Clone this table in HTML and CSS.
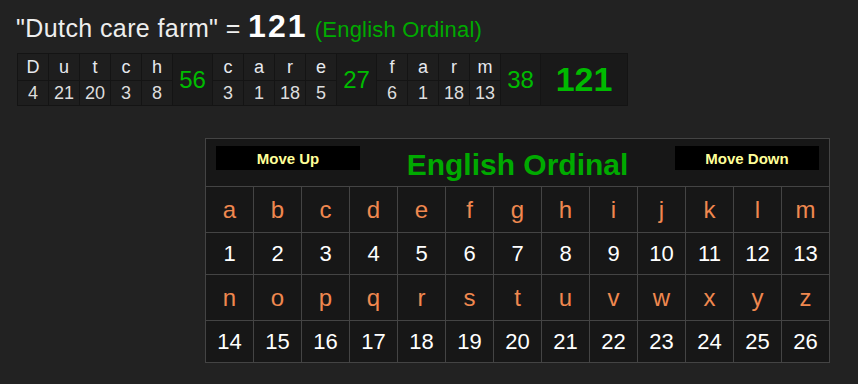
FILE: index.html
```html
<!DOCTYPE html>
<html lang="en">
<head>
    <meta charset="UTF-8">
    <meta name="viewport" content="width=device-width, initial-scale=1.0">
    <title>Dutch care farm = 121</title>
    <link rel="stylesheet" href="styles.css">
</head>
<body>
    <div class="phrase">"Dutch care farm" = <span class="total">121</span> <span class="cipher">(English Ordinal)</span></div>

    <table class="breakdown">
        <tr>
            <td class="ch">D</td><td class="ch">u</td><td class="ch">t</td><td class="ch">c</td><td class="ch">h</td>
            <td class="sum" rowspan="2">56</td>
            <td class="ch">c</td><td class="ch">a</td><td class="ch">r</td><td class="ch">e</td>
            <td class="sum" rowspan="2">27</td>
            <td class="ch">f</td><td class="ch">a</td><td class="ch">r</td><td class="ch">m</td>
            <td class="sum" rowspan="2">38</td>
            <td class="grand" rowspan="2">121</td>
        </tr>
        <tr>
            <td class="num">4</td><td class="num">21</td><td class="num">20</td><td class="num">3</td><td class="num">8</td>
            <td class="num">3</td><td class="num">1</td><td class="num">18</td><td class="num">5</td>
            <td class="num">6</td><td class="num">1</td><td class="num">18</td><td class="num">13</td>
        </tr>
    </table>

    <table class="chart">
        <tr class="head">
            <td colspan="13">
                <div class="head-bar">
                    <button class="move">Move Up</button>
                    <span class="title">English Ordinal</span>
                    <button class="move">Move Down</button>
                </div>
            </td>
        </tr>
        <tr class="letters">
            <td>a</td><td>b</td><td>c</td><td>d</td><td>e</td><td>f</td><td>g</td><td>h</td><td>i</td><td>j</td><td>k</td><td>l</td><td>m</td>
        </tr>
        <tr class="values">
            <td>1</td><td>2</td><td>3</td><td>4</td><td>5</td><td>6</td><td>7</td><td>8</td><td>9</td><td>10</td><td>11</td><td>12</td><td>13</td>
        </tr>
        <tr class="letters">
            <td>n</td><td>o</td><td>p</td><td>q</td><td>r</td><td>s</td><td>t</td><td>u</td><td>v</td><td>w</td><td>x</td><td>y</td><td>z</td>
        </tr>
        <tr class="values">
            <td>14</td><td>15</td><td>16</td><td>17</td><td>18</td><td>19</td><td>20</td><td>21</td><td>22</td><td>23</td><td>24</td><td>25</td><td>26</td>
        </tr>
    </table>
</body>
</html>
```

FILE: styles.css
```css
body{
    margin: 0;
    background-color: #222;
    font-family: "Liberation Sans", Arial, sans-serif;
    color: #ddd;
}
.phrase{
    box-sizing: border-box;
    height: 53px;
    padding: 11px 0 0 16px;
    font-size: 25px;
    line-height: 30px;
    letter-spacing: 0.4px;
    color: #eee;
}
.total{
    font-size: 32px;
    font-weight: bold;
    letter-spacing: 2px;
    color: #fff;
}
.cipher{
    font-size: 22px;
    letter-spacing: 0.2px;
    color: #0a0;
}
.breakdown{
    margin-left: 17px;
    border-spacing: 1px;
    background-color: #141414;
}
.breakdown td{
    padding: 0;
    text-align: center;
    background-color: #1e1e1e;
}
.breakdown .ch{
    width: 30px;
    height: 26px;
    font-size: 18px;
    color: #e6e9ee;
}
.breakdown .num{
    height: 24px;
    font-size: 18px;
    color: #ddd;
}
.breakdown .sum{
    width: 39px;
    font-size: 24px;
    color: #0b0;
    background-color: #1b1b1b;
}
.breakdown .grand{
    width: 86px;
    font-size: 34px;
    font-weight: bold;
    color: #0b0;
    background-color: #191919;
}
.chart{
    margin: 32px 0 0 205px;
    border-collapse: collapse;
    background-color: #171717;
}
.chart td{
    width: 47px;
    padding: 0;
    border: 1px solid #444;
    text-align: center;
}
.chart .head td{
    height: 47px;
    vertical-align: top;
}
.head-bar{
    display: flex;
    justify-content: space-between;
    align-items: flex-start;
    padding: 7px 10px 0 10px;
}
.move{
    width: 144px;
    height: 24px;
    border: none;
    padding: 0;
    background-color: #000;
    color: #ff9;
    font-family: "Liberation Sans", Arial, sans-serif;
    font-size: 15px;
    font-weight: bold;
}
.title{
    margin-top: 2px;
    font-size: 30px;
    font-weight: bold;
    color: #0a0;
}
.chart .letters td{
    height: 45px;
    font-size: 24px;
    color: #f0884f;
}
.chart .values td{
    height: 41px;
    font-size: 22px;
    color: #fff;
}
```
